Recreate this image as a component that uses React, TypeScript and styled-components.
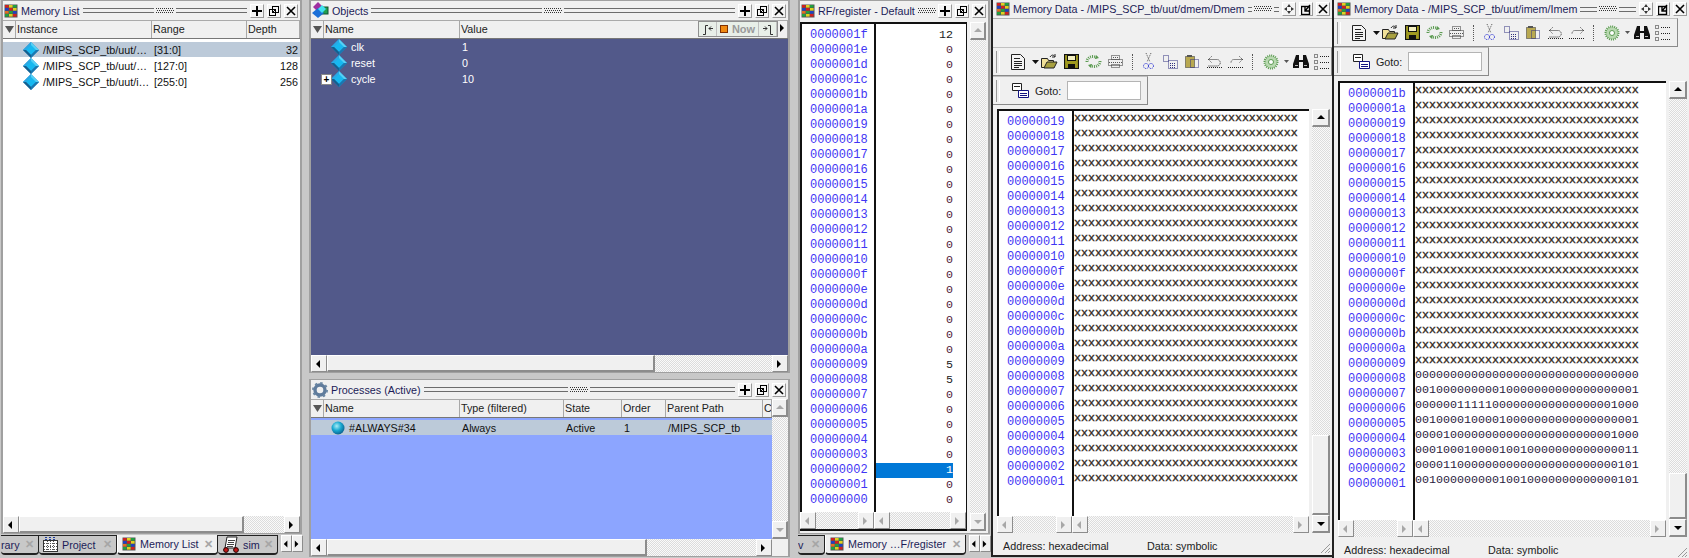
import React, { FC, ReactNode } from 'react';
import styled, { createGlobalStyle } from 'styled-components';

const UI_FONT = '"Liberation Sans", Arial, sans-serif';
const MONO_FONT = '"Liberation Mono", "Courier New", monospace';
const DITHER = 'repeating-conic-gradient(#dcdcdc 0 25%, #fafafa 0 50%) 0 0 / 2px 2px';
const UI_SIZE = '10.75px';

const GlobalStyle = createGlobalStyle`
  html, body { margin: 0; padding: 0; background: #c8c8c8; }
  body { font: ${UI_SIZE} ${UI_FONT}; color: #111; }
`;

const Root = styled.div`
  display: flex;
  width: 1689px;
  height: 558px;
  overflow: hidden;
  background: #c8c8c8;
`;

const Dock = styled.div<{ $w: number; $ml?: number }>`
  display: flex;
  flex-direction: column;
  flex: none;
  width: ${({ $w }) => $w}px;
  margin-left: ${({ $ml }) => $ml || 0}px;
`;

const Pane = styled.section<{ $h: number; $mt?: number }>`
  display: flex;
  flex-direction: column;
  flex: none;
  height: ${({ $h }) => $h}px;
  margin-top: ${({ $mt }) => $mt || 0}px;
  box-sizing: border-box;
  border: 1px solid #a0a0a0;
  border-left-width: 2px;
  border-right-width: 2px;
  background: #f0f0f0;
`;

const TitleBar = styled.div`
  display: flex;
  align-items: center;
  flex: none;
  height: 19px;
  padding: 0 2px 0 1px;
  gap: 3px;
  color: #1c1c58;
  font-size: ${UI_SIZE};
  white-space: nowrap;
`;

const Grip = styled.div`
  flex: 1;
  display: flex;
  align-items: center;
  gap: 2px;
  min-width: 0;
`;

const GripLine = styled.span`
  flex: 1;
  height: 3px;
  border-top: 1px solid #6c6c6c;
  border-bottom: 1px solid #6c6c6c;
`;

const GripDots: FC = () => (
  <svg width="18" height="6" viewBox="0 0 18 6" style={{ flex: 'none' }}>
    <path d="M0 .5h18M1 2.5h17M0 4.5h18" stroke="#333" strokeDasharray="1 1" />
  </svg>
);

const TitleBtn = styled.button`
  flex: none;
  width: 14px;
  height: 14px;
  padding: 0;
  display: flex;
  align-items: center;
  justify-content: center;
  background: #f4f4f4;
  border: 1px solid #fff;
  border-right-color: #9a9a9a;
  border-bottom-color: #9a9a9a;
`;

const HeaderRow = styled.div<{ $cols: string }>`
  display: grid;
  grid-template-columns: ${({ $cols }) => $cols};
  flex: none;
  height: 17px;
  background: #f0f0f0;
  border-bottom: 1px solid #777;
  border-top: 1px solid #aaa;
  color: #222;
  font-size: ${UI_SIZE};
  line-height: 16px;
  overflow: hidden;
`;

const HeaderCell = styled.div`
  padding-left: 1px;
  border-right: 1px solid #a8a8a8;
  white-space: nowrap;
  overflow: hidden;
`;

const SortCell = styled.div`
  display: flex;
  align-items: center;
  justify-content: center;
  border-right: 1px solid #a8a8a8;
`;

const ListBody = styled.div<{ $bg: string; $pt: number }>`
  flex: 1;
  min-height: 0;
  padding-top: ${({ $pt }) => $pt}px;
  background: ${({ $bg }) => $bg};
`;

const ListRow = styled.div<{ $cols: string; $active?: boolean; $color?: string }>`
  display: grid;
  grid-template-columns: ${({ $cols }) => $cols};
  align-items: center;
  height: ${({ $active }) => ($active ? 15 : 16)}px;
  margin-bottom: ${({ $active }) => ($active ? 1 : 0)}px;
  background: ${({ $active }) => ($active ? '#bccad9' : 'transparent')};
  color: ${({ $color }) => $color || '#111'};
  font-size: ${UI_SIZE};
`;

const ListCell = styled.div<{ $right?: boolean }>`
  padding: 0 ${({ $right }) => ($right ? 2 : 0)}px 0 2px;
  text-align: ${({ $right }) => ($right ? 'right' : 'left')};
  white-space: nowrap;
  overflow: hidden;
`;

const NameCell = styled.div`
  display: flex;
  align-items: center;
  gap: 4px;
  padding-left: 7px;
  white-space: nowrap;
  position: relative;
`;

const Expander = styled.span`
  position: absolute;
  left: -3px;
  top: 3px;
  width: 9px;
  height: 9px;
  background: #fff;
  border: 1px solid #888;
  color: #000;
  font: bold 10px/9px ${UI_FONT};
  text-align: center;
`;

const NowGroup = styled.div`
  position: absolute;
  right: 10px;
  top: 1px;
  height: 14px;
  display: flex;
  align-items: center;
  border: 1px solid #8f8f8f;
  background: #e8efe8;
  color: #9a9a9a;
  font: bold 11px ${UI_FONT};
`;

const NowCell = styled.span<{ $w: number }>`
  display: flex;
  align-items: center;
  justify-content: center;
  gap: 4px;
  width: ${({ $w }) => $w}px;
  height: 14px;
  border-right: 1px solid #c0c0c0;
  color: #9a9a9a;
`;

const NowSwatch = styled.i`
  width: 6px;
  height: 6px;
  background: #f08a10;
  border: 1px solid #803000;
`;

const NowMore = styled.span`
  position: absolute;
  right: 0;
  top: 3px;
  color: #000;
`;

const HeaderWrap = styled.div`
  position: relative;
  flex: none;
`;

const HBar = styled.div<{ $mr?: number }>`
  display: flex;
  flex: none;
  height: 17px;
  margin-right: ${({ $mr }) => $mr || 0}px;
  background: ${DITHER};
`;

const ArrowBtn = styled.div<{ $muted?: boolean; $w?: number }>`
  flex: none;
  width: ${({ $w }) => $w || 16}px;
  box-sizing: border-box;
  display: flex;
  align-items: center;
  justify-content: center;
  background: #f0f0f0;
  border: 1px solid #fff;
  border-right-color: #8c8c8c;
  border-bottom-color: #8c8c8c;
  color: ${({ $muted }) => ($muted ? '#a8a8a8' : '#000')};
`;

const Thumb = styled.div<{ $w: number }>`
  flex: none;
  width: ${({ $w }) => $w}px;
  box-sizing: border-box;
  background: #f0f0f0;
  border: 1px solid #fff;
  border-right: 2px solid #8c8c8c;
  border-bottom: 2px solid #8c8c8c;
`;

const Spacer = styled.div`
  flex: 1;
`;

const Tri: FC<{ dir: 'l' | 'r' | 'u' | 'd' }> = ({ dir }) => {
  const pts = { l: '6,1 6,9 2,5', r: '2,1 2,9 6,5', u: '1,6 9,6 5,2', d: '1,3 9,3 5,7' }[dir];
  return (
    <svg width="10" height="10" viewBox="0 0 10 10">
      <polygon points={pts} fill="currentColor" />
    </svg>
  );
};

const HScroll: FC<{ thumb?: number; muted?: boolean; mr?: number }> = ({ thumb, muted, mr }) => (
  <HBar $mr={mr}>
    <ArrowBtn $muted={muted}><Tri dir="l" /></ArrowBtn>
    {thumb ? <Thumb $w={thumb} /> : null}
    <Spacer />
    <ArrowBtn $muted={muted}><Tri dir="r" /></ArrowBtn>
  </HBar>
);

const VBar = styled.div<{ $w: number }>`
  display: flex;
  flex-direction: column;
  flex: none;
  width: ${({ $w }) => $w}px;
  background: ${DITHER};
`;

const VBtn = styled.div<{ $muted?: boolean }>`
  flex: none;
  height: 18px;
  box-sizing: border-box;
  display: flex;
  align-items: center;
  justify-content: center;
  background: #f0f0f0;
  border: 1px solid #fff;
  border-right: 2px solid #8c8c8c;
  border-bottom: 2px solid #8c8c8c;
  color: ${({ $muted }) => ($muted ? '#a8a8a8' : '#000')};
`;

const VThumb = styled.div<{ $h: number }>`
  flex: none;
  height: ${({ $h }) => $h}px;
  box-sizing: border-box;
  background: #f0f0f0;
  border: 1px solid #fff;
  border-right: 2px solid #8c8c8c;
  border-bottom: 2px solid #8c8c8c;
`;

const VScroll: FC<{ w: number; muted?: boolean; thumbAtEnd?: number }> = ({ w, muted, thumbAtEnd }) => (
  <VBar $w={w}>
    <VBtn $muted={muted}><Tri dir="u" /></VBtn>
    <Spacer />
    {thumbAtEnd ? <VThumb $h={thumbAtEnd} /> : null}
    <VBtn $muted={muted}><Tri dir="d" /></VBtn>
  </VBar>
);

const BodyRow = styled.div`
  display: flex;
  flex: 1;
  min-height: 0;
`;

const BodyMain = styled.div`
  display: flex;
  flex-direction: column;
  flex: 1;
  min-width: 0;
`;

const TabStrip = styled.div`
  display: flex;
  align-items: flex-start;
  flex: none;
  height: 23px;
  padding-top: 1px;
  position: relative;
  font-size: ${UI_SIZE};
  color: #1c1c58;
`;

const Tab = styled.div<{ $w: number; $active?: boolean; $px?: number }>`
  flex: none;
  display: flex;
  align-items: center;
  gap: 4px;
  box-sizing: border-box;
  width: ${({ $w }) => $w}px;
  height: 20px;
  padding: 0 4px 0 ${({ $px }) => ($px === undefined ? 4 : $px)}px;
  white-space: nowrap;
  overflow: hidden;
  background: ${({ $active }) => ($active ? '#f0f0f0' : '#c8c8c8')};
  border-right: 1px solid #222;
  border-bottom: 2px solid #222;
  border-left: ${({ $active }) => ($active ? '1px solid #fff' : 'none')};
  border-top: ${({ $active }) => ($active ? 'none' : '1px solid #222')};
  border-radius: 0 0 4px 4px;
`;

const TabLabel = styled.span`
  flex: 1;
  overflow: hidden;
`;

const TabClose = styled.span`
  flex: none;
  color: #a6a6a6;
  font: bold 11px ${UI_FONT};
`;

const TabNav = styled.div`
  display: flex;
  margin-left: 3px;
  height: 17px;
`;

const MemWindow = styled.section<{ $w: number; $ml: number; $h: number }>`
  display: flex;
  flex-direction: column;
  flex: none;
  box-sizing: border-box;
  width: ${({ $w }) => $w}px;
  height: ${({ $h }) => $h}px;
  margin-left: ${({ $ml }) => $ml}px;
  background: #f0f0f0;
  border-left: 2px solid #222;
  border-bottom: 2px solid #222;
`;

const WinTitle = styled(TitleBar)`
  padding-left: 3px;
  height: 18px;
`;

const Band = styled.div<{ $h: number }>`
  flex: none;
  height: ${({ $h }) => $h}px;
  border-top: 1px solid #b0b0b0;
`;

const Toolbar = styled.div<{ $w: number; $h: number }>`
  display: flex;
  align-items: center;
  flex: none;
  box-sizing: border-box;
  width: ${({ $w }) => $w}px;
  height: ${({ $h }) => $h}px;
  padding-left: 3px;
  border: 1px solid #8a8a8a;
  border-left: none;
  border-top-color: #c0c0c0;
  background: #f0f0f0;
`;

const ToolGrip = styled.span`
  flex: none;
  width: 2px;
  height: 22px;
  margin-right: 10px;
  border-left: 1px solid #999;
  border-right: 1px solid #fff;
`;

const ToolIcon = styled.span<{ $w: number }>`
  flex: none;
  width: ${({ $w }) => $w}px;
  height: 18px;
  display: flex;
  align-items: center;
  justify-content: flex-start;
`;

const ToolSep = styled.span`
  flex: none;
  width: 0;
  height: 16px;
  margin-right: 10px;
  border-left: 1px dotted #555;
`;

const GotoLabel = styled.span`
  flex: none;
  margin: 0 6px;
  font-size: ${UI_SIZE};
  color: #222;
`;

const GotoInput = styled.div`
  flex: none;
  width: 72px;
  height: 17px;
  background: #fff;
  border: 1px solid #b4b4b4;
`;

const MemBody = styled.div<{ $pl: number; $pt: number; $pb?: number }>`
  display: flex;
  flex: 1;
  min-height: 0;
  padding: ${({ $pt }) => $pt}px 2px ${({ $pb }) => $pb || 0}px ${({ $pl }) => $pl}px;
  gap: 3px;
`;

const MemGrid = styled.div<{ $addr: number; $framed?: boolean }>`
  display: grid;
  flex: 1;
  min-width: 0;
  grid-template-columns: ${({ $addr }) => $addr}px 1fr;
  grid-template-rows: 1fr 17px;
  background: #f0f0f0;
  border-bottom: ${({ $framed }) => ($framed ? '2px solid #111' : 'none')};
  border-right: ${({ $framed }) => ($framed ? '1px solid #111' : 'none')};
`;

const AddrCol = styled.div`
  padding-top: 4px;
  overflow: hidden;
  background: #fff;
  border-top: 2px solid #111;
  border-left: 2px solid #111;
`;

const DataCol = styled.div<{ $pt: number }>`
  padding-top: ${({ $pt }) => $pt}px;
  overflow: hidden;
  background: #fff;
  border-top: 2px solid #111;
  border-left: 2px solid #111;
`;

const AddrLine = styled.div`
  height: 15px;
  padding-left: 8px;
  color: #3f36f4;
  font: 12px/15px ${MONO_FONT};
`;

const DataLine = styled.div<{ $x?: boolean }>`
  height: 15px;
  color: ${({ $x }) => ($x ? '#30281c' : '#2a1a40')};
  font: 11.67px/10px ${MONO_FONT};
  -webkit-text-stroke: ${({ $x }) => ($x ? '0.35px' : '0')};
  white-space: pre;
`;

const ValueLine = styled.div<{ $sel?: boolean; $dim?: boolean }>`
  height: 15px;
  margin-right: 13px;
  text-align: right;
  background: ${({ $sel }) => ($sel ? '#0078d7' : 'transparent')};
  color: ${({ $sel, $dim }) => ($sel ? '#fff' : $dim ? '#502038' : '#222')};
  font: 11.67px/15px ${MONO_FONT};
`;

const StatusBar = styled.div<{ $pl: number }>`
  display: flex;
  align-items: center;
  flex: none;
  box-sizing: border-box;
  height: 22px;
  padding: 4px 0 0 ${({ $pl }) => $pl}px;
  font-size: ${UI_SIZE};
  color: #222;
  position: relative;
`;

const StatusText = styled.span<{ $w: number }>`
  flex: none;
  width: ${({ $w }) => $w}px;
`;

const Resize = styled.svg`
  position: absolute;
  right: 1px;
  bottom: 1px;
`;

// --- icons ---

const GridIcon: FC = () => {
  const colors = [
    ['#d02020', '#e0d020', '#20a040'],
    ['#2040c0', '#d02020', '#e0d020'],
    ['#e07020', '#20a040', '#2040c0'],
    ['#20a040', '#e0d020', '#d02020'],
  ];
  return (
    <svg width="14" height="14" viewBox="0 0 14 14" style={{ flex: 'none' }}>
      <rect x="0.5" y="0.5" width="13" height="13" fill="#555" />
      {colors.map((row, y) =>
        row.map((c, x) => <rect key={`${x}${y}`} x={1 + x * 4} y={1 + y * 3} width="3.6" height="2.6" fill={c} />),
      )}
    </svg>
  );
};

const Diamond: FC = () => (
  <svg width="16" height="16" viewBox="0 0 16 16" style={{ flex: 'none' }}>
    <polygon points="8,0 16,8 8,16 0,8" fill="#1c86c8" />
    <polygon points="8,0 16,8 8,8" fill="#55d0f5" />
    <polygon points="8,0 0,8 8,8" fill="#2aa8e4" />
    <polygon points="8,3 13,8 8,13 3,8" fill="#17b8f0" />
    <polygon points="0,8 8,16 8,13 3,8" fill="#14608f" />
    <polygon points="16,8 8,16 8,13 13,8" fill="#1a78b0" />
  </svg>
);

const Ball: FC = () => (
  <svg width="14" height="14" viewBox="0 0 14 14" style={{ flex: 'none' }}>
    <defs>
      <radialGradient id="ball" cx="0.4" cy="0.35" r="0.7">
        <stop offset="0" stopColor="#a8ecf6" />
        <stop offset="0.5" stopColor="#18a8d0" />
        <stop offset="1" stopColor="#0a5a88" />
      </radialGradient>
    </defs>
    <circle cx="7" cy="7" r="6.5" fill="url(#ball)" />
  </svg>
);

const ObjectsIcon: FC = () => (
  <svg width="17" height="17" viewBox="0 0 17 17" style={{ flex: 'none' }}>
    <polygon points="6,0 11,5 6,10 1,5" fill="#a030a0" />
    <rect x="9" y="5" width="7" height="7" fill="#20a050" stroke="#105030" />
    <polygon points="6,6 12,11 6,16 0,11" fill="#1c70d8" />
    <polygon points="10,3 14,7 10,11 6,7" fill="#40e0f0" />
  </svg>
);

const GearIcon: FC = () => (
  <svg width="16" height="16" viewBox="0 0 16 16" style={{ flex: 'none' }}>
    <circle cx="8" cy="8" r="5" fill="none" stroke="#607c9c" strokeWidth="3.4" />
    <circle cx="8" cy="8" r="7" fill="none" stroke="#6c88a4" strokeWidth="2" strokeDasharray="2.4 3.1" />
  </svg>
);

const ProjectIcon: FC = () => (
  <svg width="15" height="15" viewBox="0 0 15 15" style={{ flex: 'none' }}>
    <rect x="0.5" y="3.5" width="14" height="11" fill="#fff" stroke="#333" />
    <path d="M1 6.5h13M1 9.5h13M1 12.5h13M4.5 4v10M7.5 4v10M10.5 4v10" stroke="#555" strokeDasharray="1 1" />
    <path d="M3 0v3M7 0v3M11 0v3" stroke="#2040a0" strokeWidth="2" strokeDasharray="1 1" />
  </svg>
);

const SimIcon: FC = () => (
  <svg width="17" height="17" viewBox="0 0 17 17" style={{ flex: 'none' }}>
    <polygon points="5,1 15,1 13,12 3,12" fill="#fff" stroke="#222" />
    <path d="M6 4.5h7M6 6.5h6M5 8.5h7M5 10.5h6" stroke="#444" />
    <circle cx="4" cy="14" r="2.4" fill="#c01818" stroke="#200" />
    <circle cx="14" cy="14" r="2.4" fill="#c01818" stroke="#200" />
  </svg>
);

const PlusGlyph: FC = () => (
  <svg width="10" height="10" viewBox="0 0 10 10">
    <path d="M5 0v10M0 5h10" stroke="#000" strokeWidth="2" />
  </svg>
);

const PopGlyph: FC = () => (
  <svg width="10" height="10" viewBox="0 0 10 10">
    <rect x="0.5" y="3.5" width="6" height="6" fill="none" stroke="#000" />
    <rect x="3.5" y="0.5" width="6" height="6" fill="none" stroke="#000" />
    <path d="M3 7l3-3" stroke="#000" />
  </svg>
);

const CloseGlyph: FC = () => (
  <svg width="10" height="10" viewBox="0 0 10 10">
    <path d="M1 1l8 8M9 1l-8 8" stroke="#000" strokeWidth="1.6" />
  </svg>
);

const DockGlyph: FC = () => (
  <svg width="10" height="10" viewBox="0 0 10 10">
    <path d="M5 0l2 3H3zM5 10l2-3H3zM0 5l3-2v4zM10 5L7 3v4z" fill="#333" />
  </svg>
);

const DockInGlyph: FC = () => (
  <svg width="11" height="11" viewBox="0 0 11 11">
    <rect x="0.5" y="2.5" width="8" height="8" fill="none" stroke="#000" strokeWidth="1.4" />
    <path d="M9 1L4 7M4 3v4h4" stroke="#000" strokeWidth="1.4" fill="none" />
  </svg>
);

const StepGlyph: FC<{ flip?: boolean }> = ({ flip }) => (
  <svg width="12" height="11" viewBox="0 0 12 11" style={flip ? { transform: 'scaleX(-1)' } : undefined}>
    <path d="M1 10.5h2.5V1.5H6" fill="none" stroke="#333" />
    <path d="M11 4.5H7M9 2.5l-2 2 2 2" fill="none" stroke="#333" />
  </svg>
);

const TOOL_ICONS: { w: number; node: ReactNode }[] = [
  {
    w: 22,
    node: (
      <svg width="16" height="18" viewBox="0 0 16 18">
        <path d="M1.5 1.5h9l4 4v11h-13z" fill="#f4f4f4" stroke="#222" />
        <path d="M4 5.5h6M4 8.5h8M4 10.5h8M4 12.5h8M4 14.5h5" stroke="#222" />
      </svg>
    ),
  },
  {
    w: 9,
    node: (
      <svg width="7" height="4" viewBox="0 0 7 4">
        <polygon points="0,0 7,0 3.5,4" fill="#111" />
      </svg>
    ),
  },
  {
    w: 23,
    node: (
      <svg width="17" height="15" viewBox="0 0 17 15">
        <path d="M0.5 4.5h6l1 2h5v7h-12z" fill="#f0e098" stroke="#222" />
        <path d="M3 14l3-6h10l-3 6z" fill="#a8a040" stroke="#222" />
        <path d="M9 3c2-3 4-2 5 0M14 0v3h-3" stroke="#222" fill="none" />
      </svg>
    ),
  },
  {
    w: 21,
    node: (
      <svg width="15" height="15" viewBox="0 0 15 15">
        <rect x="0.5" y="0.5" width="14" height="14" fill="#a09a20" stroke="#111" strokeWidth="1.2" />
        <rect x="3.5" y="1.5" width="8" height="5" fill="#f4f0c0" stroke="#111" />
        <rect x="4" y="10" width="7" height="4" fill="#111" />
      </svg>
    ),
  },
  {
    w: 22,
    node: (
      <svg width="17" height="15" viewBox="0 0 17 15">
        <path d="M2 8c0-5 6-7 10-4M15 7c0 5-6 7-10 4" fill="none" stroke="#5a9a50" strokeWidth="3" strokeDasharray="1 1" />
        <path d="M11 1l3 3-4 1zM6 14l-3-3 4-1z" fill="#5a9a50" />
      </svg>
    ),
  },
  {
    w: 25,
    node: (
      <svg width="17" height="15" viewBox="0 0 17 15">
        <path d="M4.5 1.5h8v4h-8zM1.5 5.5h14v6h-14zM4.5 10.5h8v3h-8z" fill="none" stroke="#333" strokeDasharray="1 1" />
        <path d="M2 8.5h13M6 3.5h6" stroke="#555" strokeDasharray="1 1" />
      </svg>
    ),
  },
];

const TOOL_ICONS_2: { w: number; node: ReactNode }[] = [
  {
    w: 20,
    node: (
      <svg width="11" height="17" viewBox="0 0 11 17">
        <path d="M3 0l4 9M8 0L4 9" stroke="#555" strokeDasharray="1 1" />
        <circle cx="3" cy="13" r="2.5" fill="none" stroke="#1820d0" strokeDasharray="1 1" />
        <circle cx="8" cy="13" r="2.5" fill="none" stroke="#1820d0" strokeDasharray="1 1" />
      </svg>
    ),
  },
  {
    w: 21,
    node: (
      <svg width="15" height="14" viewBox="0 0 15 14">
        <path d="M0.5 0.5h5v6h-5zM5.5 5.5h9v8h-9z" fill="none" stroke="#303080" strokeDasharray="1 1" />
        <path d="M7 8.5h6M7 10.5h6M7 12.5h6" stroke="#303080" strokeDasharray="1 1" />
      </svg>
    ),
  },
  {
    w: 23,
    node: (
      <svg width="16" height="15" viewBox="0 0 16 15">
        <rect x="1.5" y="2.5" width="9" height="11" fill="#b8a850" stroke="#333" strokeDasharray="1 1" />
        <rect x="6.5" y="5.5" width="8" height="8" fill="none" stroke="#303080" strokeDasharray="1 1" />
        <path d="M3 1h5v2H3z" fill="#555" />
      </svg>
    ),
  },
  {
    w: 21,
    node: (
      <svg width="16" height="13" viewBox="0 0 16 13">
        <path d="M4.5 1.5l-3 3 3 3M1.5 4.5h8.5a3 3 0 0 1 0 6.5H1M0 12.5h15" fill="none" stroke="#222" strokeDasharray="1 1" />
      </svg>
    ),
  },
  {
    w: 24,
    node: (
      <svg width="16" height="13" viewBox="0 0 16 13">
        <path d="M11.5 1.5l3 3-3 3M14.5 4.5H6a3 3 0 0 0-3 3M0 12.5h15" fill="none" stroke="#222" strokeDasharray="1 1" />
      </svg>
    ),
  },
];

const TOOL_ICONS_3: { w: number; node: ReactNode }[] = [
  {
    w: 21,
    node: (
      <svg width="16" height="16" viewBox="0 0 16 16">
        <circle cx="8" cy="8" r="6.5" fill="#b8d8b0" stroke="#5a9a50" strokeWidth="2" strokeDasharray="1 1" />
        <circle cx="8" cy="8" r="2.5" fill="#fff" stroke="#5a9a50" />
      </svg>
    ),
  },
  {
    w: 9,
    node: (
      <svg width="5" height="3" viewBox="0 0 5 3">
        <polygon points="0,0 5,0 2.5,3" fill="#555" />
      </svg>
    ),
  },
  {
    w: 21,
    node: (
      <svg width="16" height="15" viewBox="0 0 16 15">
        <path d="M3 1h3v5h4V1h3l3 9v4h-6V8H6v6H0v-4z" fill="#111" />
        <path d="M2 11.5h3M11 11.5h3" stroke="#bbb" />
      </svg>
    ),
  },
  {
    w: 15,
    node: (
      <svg width="15" height="17" viewBox="0 0 15 17">
        <path d="M.5 1.5h3v3h-3zM.5 7.5h3v3h-3zM.5 13.5h3v3h-3zM6 3.5h9M6 9.5h9M6 15.5h9" fill="none" stroke="#222" strokeDasharray="1 1" />
      </svg>
    ),
  },
];

const GotoIcon: FC = () => (
  <svg width="17" height="15" viewBox="0 0 17 15" style={{ flex: 'none', marginLeft: 2 }}>
    <path d="M0.5 0.5h9v7h-9zM2 3.5h6" fill="#fff" stroke="#222" />
    <path d="M6.5 7.5h10v7h-10zM8 10.5h7M8 12.5h7" fill="#fff" stroke="#121280" />
  </svg>
);

const Sort: FC = () => (
  <svg width="9" height="9" viewBox="0 0 9 9">
    <polygon points="0,1 9,1 4.5,8" fill="#555" />
  </svg>
);

// --- composed parts ---

const PaneTitle: FC<{ icon: ReactNode; title: string; short?: boolean }> = ({ icon, title, short }) => (
  <TitleBar>
    {icon}
    <span>{title}</span>
    <Grip>
      {short ? null : <GripLine />}
      <GripDots />
      {short ? null : <GripLine />}
    </Grip>
    <TitleBtn><PlusGlyph /></TitleBtn>
    <TitleBtn><PopGlyph /></TitleBtn>
    <TitleBtn><CloseGlyph /></TitleBtn>
  </TitleBar>
);

const Header: FC<{ cols: string; labels: string[] }> = ({ cols, labels }) => (
  <HeaderRow $cols={cols}>
    <SortCell><Sort /></SortCell>
    {labels.map((l) => (
      <HeaderCell key={l}>{l}</HeaderCell>
    ))}
  </HeaderRow>
);

const MEM_COLS = '13px 136px 95px 1fr';
const OBJ_COLS = '13px 136px 1fr';
const PROC_COLS = '13px 136px 104px 58px 44px 97px 1fr';

const memRows = [
  { name: '/MIPS_SCP_tb/uut/…', range: '[31:0]', depth: '32', active: true },
  { name: '/MIPS_SCP_tb/uut/…', range: '[127:0]', depth: '128' },
  { name: '/MIPS_SCP_tb/uut/i…', range: '[255:0]', depth: '256' },
];

const hex = (n: number) => n.toString(16).padStart(8, '0');
const range = (from: number, to: number) => {
  const out: number[] = [];
  for (let i = from; i >= to; i--) out.push(i);
  return out;
};

const XS = 'x'.repeat(32);

const regValues: Record<number, string> = { 31: '12', 9: '5', 8: '5', 2: '1' };

const imemValues: Record<number, string> = {
  8: '00000000000000000000000000000000',
  7: '00100000000010000000000000000001',
  6: '00000011111000000000000000001000',
  5: '00100001000010000000000000000001',
  4: '00001000000000000000000000001000',
  3: '00010001000010010000000000000011',
  2: '00001100000000000000000000000101',
  1: '00100000000010010000000000000101',
};

const Tools: FC<{ width: number; height: number }> = ({ width, height }) => (
  <Toolbar $w={width} $h={height}>
    <ToolGrip />
    {TOOL_ICONS.map((t, i) => <ToolIcon key={i} $w={t.w}>{t.node}</ToolIcon>)}
    <ToolSep />
    {TOOL_ICONS_2.map((t, i) => <ToolIcon key={i} $w={t.w}>{t.node}</ToolIcon>)}
    <ToolSep />
    {TOOL_ICONS_3.map((t, i) => <ToolIcon key={i} $w={t.w}>{t.node}</ToolIcon>)}
  </Toolbar>
);

const Goto: FC = () => (
  <Toolbar $w={155} $h={29}>
    <ToolGrip />
    <GotoIcon />
    <GotoLabel>Goto:</GotoLabel>
    <GotoInput />
  </Toolbar>
);

const Status: FC<{ pl: number }> = ({ pl }) => (
  <StatusBar $pl={pl}>
    <StatusText $w={144}>Address: hexadecimal</StatusText>
    <span>Data: symbolic</span>
    <Resize width="12" height="12" viewBox="0 0 12 12">
      <path d="M11 2L2 11M11 6l-5 5M11 9l-2 2" stroke="#999" />
    </Resize>
  </StatusBar>
);

const MemoryWindow: FC<{
  width: number;
  left: number;
  height: number;
  title: string;
  band: number;
  toolWidth: number;
  bodyTop: number;
  from: number;
  data: (n: number) => string;
  scrollThumb: number;
}> = ({ width, left, height, title, band, toolWidth, bodyTop, from, data, scrollThumb }) => (
  <MemWindow $w={width} $ml={left} $h={height}>
    <WinTitle>
      <GridIcon />
      <span>{title}</span>
      <Grip>
        <GripLine />
        <GripDots />
        <GripLine />
      </Grip>
      <TitleBtn><DockGlyph /></TitleBtn>
      <TitleBtn><DockInGlyph /></TitleBtn>
      <TitleBtn><CloseGlyph /></TitleBtn>
    </WinTitle>
    {band ? <Band $h={band} /> : null}
    <Tools width={toolWidth} height={29} />
    <Goto />
    <MemBody $pl={4} $pt={bodyTop}>
      <MemGrid $addr={75}>
        <AddrCol>
          {range(from, 1).map((n) => (
            <AddrLine key={n}>{hex(n)}</AddrLine>
          ))}
        </AddrCol>
        <DataCol $pt={2}>
          {range(from, 1).map((n) => {
            const v = data(n);
            return <DataLine key={n} $x={v === XS}>{v}</DataLine>;
          })}
        </DataCol>
        <HScroll muted />
        <HScroll muted />
      </MemGrid>
      <VScroll w={18} thumbAtEnd={scrollThumb} />
    </MemBody>
    <Status pl={10} />
  </MemWindow>
);

const App: FC = () => (
  <Root>
    <GlobalStyle />

    <Dock $w={301} $ml={1}>
      <Pane $h={534}>
        <PaneTitle icon={<GridIcon />} title="Memory List" />
        <Header cols={MEM_COLS} labels={['Instance', 'Range', 'Depth']} />
        <ListBody $bg="#fff" $pt={3}>
          {memRows.map((r) => (
            <ListRow key={r.range} $cols={MEM_COLS} $active={r.active}>
              <span />
              <NameCell>
                <Diamond />
                {r.name}
              </NameCell>
              <ListCell>{r.range}</ListCell>
              <ListCell $right>{r.depth}</ListCell>
            </ListRow>
          ))}
        </ListBody>
        <HScroll thumb={225} />
      </Pane>
      <TabStrip>
        <Tab $w={38} $px={0}>
          <TabLabel>rary</TabLabel>
          <TabClose>✕</TabClose>
        </Tab>
        <Tab $w={78}>
          <ProjectIcon />
          <TabLabel>Project</TabLabel>
          <TabClose>✕</TabClose>
        </Tab>
        <Tab $w={101} $active>
          <GridIcon />
          <TabLabel>Memory List</TabLabel>
          <TabClose>✕</TabClose>
        </Tab>
        <Tab $w={60}>
          <SimIcon />
          <TabLabel>sim</TabLabel>
          <TabClose>✕</TabClose>
        </Tab>
        <TabNav>
          <ArrowBtn $w={11}><Tri dir="l" /></ArrowBtn>
          <ArrowBtn $w={11}><Tri dir="r" /></ArrowBtn>
        </TabNav>
      </TabStrip>
    </Dock>

    <Dock $w={481} $ml={7}>
      <Pane $h={373}>
        <PaneTitle icon={<ObjectsIcon />} title="Objects" />
        <HeaderWrap>
          <Header cols={OBJ_COLS} labels={['Name', 'Value']} />
          <NowGroup>
            <NowCell $w={17}><StepGlyph /></NowCell>
            <NowCell $w={41}><NowSwatch />Now</NowCell>
            <NowCell $w={17}><StepGlyph flip /></NowCell>
          </NowGroup>
          <NowMore><Tri dir="r" /></NowMore>
        </HeaderWrap>
        <ListBody $bg="#52598a" $pt={0}>
          {[
            ['clk', '1'],
            ['reset', '0'],
            ['cycle', '10'],
          ].map(([n, v]) => (
            <ListRow key={n} $cols={OBJ_COLS} $color="#fff">
              <span />
              <NameCell>
                {n === 'cycle' ? <Expander>+</Expander> : null}
                <Diamond />
                {n}
              </NameCell>
              <ListCell>{v}</ListCell>
            </ListRow>
          ))}
        </ListBody>
        <HScroll thumb={328} />
      </Pane>
      <Pane $h={178} $mt={6}>
        <PaneTitle icon={<GearIcon />} title="Processes (Active)" />
        <BodyRow>
          <BodyMain>
            <Header cols={PROC_COLS} labels={['Name', 'Type (filtered)', 'State', 'Order', 'Parent Path', 'C']} />
            <ListBody $bg="#8ca5ff" $pt={2}>
              <ListRow $cols={PROC_COLS} $active>
                <span />
                <NameCell>
                  <Ball />
                  #ALWAYS#34
                </NameCell>
                <ListCell>Always</ListCell>
                <ListCell>Active</ListCell>
                <ListCell>1</ListCell>
                <ListCell>/MIPS_SCP_tb</ListCell>
              </ListRow>
            </ListBody>
          </BodyMain>
          <VScroll w={16} muted />
        </BodyRow>
        <HScroll thumb={320} mr={16} />
      </Pane>
    </Dock>

    <Dock $w={192} $ml={8}>
      <Pane $h={534}>
        <PaneTitle icon={<GridIcon />} title="RF/register - Default" short />
        <MemBody $pl={0} $pt={2} $pb={2}>
          <MemGrid $addr={74} $framed>
            <AddrCol>
              {range(31, 0).map((n) => (
                <AddrLine key={n}>{hex(n)}</AddrLine>
              ))}
            </AddrCol>
            <DataCol $pt={4}>
              {range(31, 0).map((n) => (
                <ValueLine key={n} $sel={n === 2} $dim={!regValues[n]}>{regValues[n] || '0'}</ValueLine>
              ))}
            </DataCol>
            <HScroll muted />
            <HScroll muted />
          </MemGrid>
          <VScroll w={16} muted />
        </MemBody>
      </Pane>
      <TabStrip>
        <Tab $w={27} $px={0}>
          <TabLabel>v</TabLabel>
          <TabClose>✕</TabClose>
        </Tab>
        <Tab $w={141} $active>
          <GridIcon />
          <TabLabel>Memory …F/register</TabLabel>
          <TabClose>✕</TabClose>
        </Tab>
        <TabNav>
          <ArrowBtn $w={11}><Tri dir="l" /></ArrowBtn>
          <ArrowBtn $w={11}><Tri dir="r" /></ArrowBtn>
        </TabNav>
      </TabStrip>
    </Dock>

    <MemoryWindow
      width={341}
      left={1}
      height={557}
      title="Memory Data - /MIPS_SCP_tb/uut/dmem/Dmem"
      band={28}
      toolWidth={339}
      bodyTop={4}
      from={25}
      data={() => XS}
      scrollThumb={80}
    />
    <MemoryWindow
      width={357}
      left={0}
      height={561}
      title="Memory Data - /MIPS_SCP_tb/uut/imem/Imem"
      band={0}
      toolWidth={344}
      bodyTop={5}
      from={27}
      data={(n) => imemValues[n] || XS}
      scrollThumb={46}
    />
  </Root>
);

export default App;
